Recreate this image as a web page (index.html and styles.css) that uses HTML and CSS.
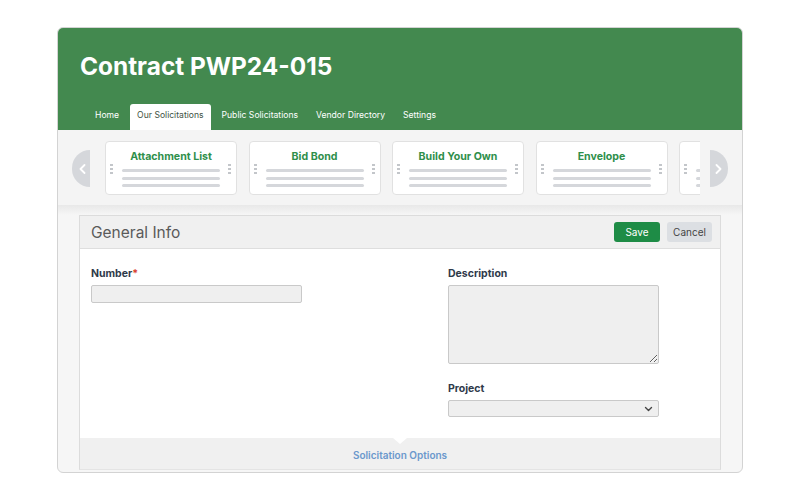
FILE: index.html
```html
<!DOCTYPE html>
<html lang="en">
<head>
    <meta charset="UTF-8">
    <meta name="viewport" content="width=device-width, initial-scale=1.0">
    <title>Contract PWP24-015</title>
    <link rel="stylesheet" href="styles.css">
</head>
<body>
    <div class="window">
        <header class="top">
            <h1>Contract PWP24-015</h1>
            <nav class="tabs">
                <a href="#">Home</a>
                <a href="#" class="active">Our Solicitations</a>
                <a href="#">Public Solicitations</a>
                <a href="#">Vendor Directory</a>
                <a href="#">Settings</a>
            </nav>
        </header>

        <section class="carousel">
            <div class="arrow prev">
                <svg width="7" height="10" viewBox="0 0 7 10"><path d="M5.5 1 L1.5 5 L5.5 9" fill="none" stroke="#fff" stroke-width="1.8" stroke-linecap="round" stroke-linejoin="round"/></svg>
            </div>
            <div class="viewport">
                <div class="tpl">
                    <span class="grip left"></span>
                    <h3>Attachment List</h3>
                    <div class="lines"><i></i><i></i><i></i></div>
                    <span class="grip right"></span>
                </div>
                <div class="tpl">
                    <span class="grip left"></span>
                    <h3>Bid Bond</h3>
                    <div class="lines"><i></i><i></i><i></i></div>
                    <span class="grip right"></span>
                </div>
                <div class="tpl">
                    <span class="grip left"></span>
                    <h3>Build Your Own</h3>
                    <div class="lines"><i></i><i></i><i></i></div>
                    <span class="grip right"></span>
                </div>
                <div class="tpl">
                    <span class="grip left"></span>
                    <h3>Envelope</h3>
                    <div class="lines"><i></i><i></i><i></i></div>
                    <span class="grip right"></span>
                </div>
                <div class="tpl">
                    <span class="grip left"></span>
                    <h3></h3>
                    <div class="lines"><i></i><i></i><i></i></div>
                    <span class="grip right"></span>
                </div>
            </div>
            <div class="arrow next">
                <svg width="7" height="10" viewBox="0 0 7 10"><path d="M1.5 1 L5.5 5 L1.5 9" fill="none" stroke="#fff" stroke-width="1.8" stroke-linecap="round" stroke-linejoin="round"/></svg>
            </div>
        </section>

        <div class="shade"></div>

        <div class="content">
            <div class="panel">
                <div class="panel-head">
                    <h2>General Info</h2>
                    <div class="actions">
                        <button class="btn save">Save</button>
                        <button class="btn cancel">Cancel</button>
                    </div>
                </div>
                <div class="panel-body">
                    <div class="col">
                        <label>Number<span class="req">*</span></label>
                        <input type="text" class="field short">
                    </div>
                    <div class="col">
                        <label>Description</label>
                        <textarea class="field area"></textarea>
                        <label class="gap">Project</label>
                        <div class="field select">
                            <svg width="9" height="6" viewBox="0 0 9 6"><path d="M1.5 1.5 L4.5 4.5 L7.5 1.5" fill="none" stroke="#444" stroke-width="1.4" stroke-linecap="round" stroke-linejoin="round"/></svg>
                        </div>
                    </div>
                </div>
                <div class="panel-foot">
                    <span class="notch"></span>
                    <a href="#">Solicitation Options</a>
                </div>
            </div>
        </div>
    </div>
</body>
</html>
```

FILE: styles.css
```css
* {
    box-sizing: border-box;
}
body {
    margin: 0;
    background-color: #fff;
    font-family: Inter, 'Noto Sans', sans-serif;
}
.window {
    width: 686px;
    height: 446px;
    margin: 27px 0 0 57px;
    border: 1px solid #d3d3d3;
    border-radius: 6px;
    overflow: hidden;
    background-color: #f6f6f6;
}
.top {
    background-color: #43894f;
    height: 102px;
    padding-top: 22px;
}
.top h1 {
    margin: 0 0 22px 22px;
    color: #fff;
    font-size: 24.4px;
    line-height: 32px;
    font-weight: 700;
}
.tabs {
    display: flex;
    gap: 4px;
    padding-left: 30px;
}
.tabs a {
    display: block;
    height: 26px;
    padding: 0 7px 4px;
    line-height: 22px;
    font-size: 8.6px;
    color: #fff;
    text-decoration: none;
    border-radius: 3px 3px 0 0;
}
.tabs a.active {
    background-color: #fff;
    color: #3e5243;
}
.carousel {
    height: 75px;
    display: flex;
    align-items: flex-start;
    padding: 11px 14px 0 14px;
    background-color: #f4f4f4;
}
.arrow {
    width: 18px;
    height: 37px;
    margin-top: 9px;
    background-color: #d5d7db;
    display: flex;
    align-items: center;
    justify-content: center;
    flex-shrink: 0;
}
.arrow.prev {
    border-radius: 19px 0 0 19px;
    padding-left: 2px;
}
.arrow.next {
    border-radius: 0 19px 19px 0;
    padding-right: 2px;
}
.viewport {
    width: 596px;
    margin: 0 10px 0 15px;
    display: flex;
    gap: 11.5px;
    overflow: hidden;
}
.tpl {
    position: relative;
    flex-shrink: 0;
    width: 132px;
    height: 54px;
    background-color: #fff;
    border: 1px solid #e1e1e1;
    border-radius: 4px;
    padding-top: 8px;
}
.tpl h3 {
    margin: 0;
    height: 14px;
    text-align: center;
    font-size: 10.6px;
    line-height: 14px;
    font-weight: 700;
    color: #2f8f4b;
}
.lines {
    margin: 5px 16px 0;
    display: flex;
    flex-direction: column;
    gap: 4.5px;
}
.lines i {
    display: block;
    height: 3px;
    border-radius: 2px;
    background-color: #d5d7db;
}
.grip {
    position: absolute;
    top: 21px;
    width: 3px;
    height: 11px;
    background-image: radial-gradient(circle, #c3c6ca 1.3px, transparent 1.5px);
    background-size: 3px 4px;
}
.grip.left {
    left: 4px;
}
.grip.right {
    right: 5px;
}
.shade {
    height: 10px;
    background: linear-gradient(#e8e8e8, #f6f6f6);
}
.content {
    padding: 0 21px;
}
.panel {
    border: 1px solid #dcdcdc;
    border-bottom-color: #e4e4e4;
    background-color: #fff;
}
.panel-head {
    height: 33px;
    background-color: #f0f0f0;
    border-bottom: 1px solid #dedede;
    display: flex;
    align-items: center;
    justify-content: space-between;
    padding: 0 8px 0 11px;
}
.panel-head h2 {
    margin: 0;
    font-size: 15.5px;
    font-weight: 400;
    color: #5a5a5a;
}
.actions {
    display: flex;
    gap: 7px;
}
.btn {
    height: 20px;
    border: none;
    border-radius: 3px;
    font-family: inherit;
    font-size: 10px;
    padding: 0;
    cursor: pointer;
}
.btn.save {
    width: 46px;
    background-color: #1e8c46;
    color: #fff;
}
.btn.cancel {
    width: 45px;
    background-color: #dcdfe3;
    color: #444;
}
.panel-body {
    display: grid;
    grid-template-columns: 357px 1fr;
    padding: 18px 11px 21px;
}
.col label {
    display: block;
    font-size: 10.5px;
    line-height: 14px;
    font-weight: 700;
    color: #2f3a4a;
    margin-bottom: 4px;
}
.col label.gap {
    margin-top: 18px;
    margin-bottom: 4px;
}
.req {
    color: #d9412f;
}
.field {
    display: block;
    width: 211px;
    margin: 0;
    background-color: #efefef;
    border: 1px solid #c9c9c9;
    border-radius: 2px;
}
.field.short {
    height: 18px;
}
.field.area {
    height: 79px;
    resize: vertical;
}
.field.select {
    height: 17px;
    display: flex;
    align-items: center;
    justify-content: flex-end;
    padding-right: 5px;
}
.panel-foot {
    position: relative;
    height: 31px;
    background-color: #f0f0f0;
    text-align: center;
    padding-top: 3px;
}
.panel-foot a {
    line-height: 29px;
    font-size: 10px;
    font-weight: 600;
    color: #6b98cc;
    text-decoration: none;
}
.notch {
    position: absolute;
    top: 0;
    left: 50%;
    margin-left: -7px;
    width: 0;
    height: 0;
    border-left: 7px solid transparent;
    border-right: 7px solid transparent;
    border-top: 6px solid #fff;
}
```
